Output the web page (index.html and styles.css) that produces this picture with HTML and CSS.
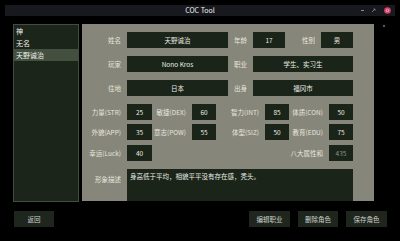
FILE: index.html
```html
<!DOCTYPE html>
<html lang="zh">
<head>
<meta charset="utf-8">
<title>COC Tool</title>
<link rel="stylesheet" href="styles.css">
</head>
<body>
<div class="app">
  <div class="titlebar">
    <span class="title">COC Tool</span>
    <div class="controls">
      <span class="min"></span>
      <svg class="max" width="5" height="5" viewBox="0 0 5 5"><path d="M1 4 L4 1" stroke="#8a8a90" stroke-width="0.8" fill="none"/><path d="M2.5 1 H4 V2.5" stroke="#8a8a90" stroke-width="0.8" fill="none"/></svg>
      <svg class="close" width="7" height="7" viewBox="0 0 7 7"><circle cx="3.5" cy="3.5" r="3.3" fill="#d8456a"/><circle cx="3.5" cy="3.5" r="1.6" fill="#f3b3c4"/><circle cx="3.5" cy="3.5" r="0.9" fill="#d8456a"/></svg>
    </div>
  </div>
  <span class="grip"></span>
  <div class="content">
    <ul class="list">
      <li>神</li>
      <li>无名</li>
      <li class="sel">天野诚治</li>
    </ul>
    <div class="panel">
      <div class="row">
        <span class="lb w45">姓名</span><span class="fd w101">天野诚治</span>
        <span class="lb w25">年龄</span><span class="fd w32">17</span>
        <span class="lb w36">性别</span><span class="fd w32">男</span>
      </div>
      <div class="row">
        <span class="lb w45">玩家</span><span class="fd w101">Nono Kros</span>
        <span class="lb w25">职业</span><span class="fd w100">学生、实习生</span>
      </div>
      <div class="row">
        <span class="lb w45">住地</span><span class="fd w101">日本</span>
        <span class="lb w25">出身</span><span class="fd w100">福冈市</span>
      </div>
      <div class="stats">
        <div class="row">
          <span class="lb w45">力量(STR)</span><span class="fd w25">25</span>
          <span class="lb w40">敏捷(DEX)</span><span class="fd w24">60</span>
          <span class="lb w49">智力(INT)</span><span class="fd w24">85</span>
          <span class="lb w40">体质(CON)</span><span class="fd w24">50</span>
        </div>
        <div class="row">
          <span class="lb w45">外貌(APP)</span><span class="fd w25">35</span>
          <span class="lb w40">意志(POW)</span><span class="fd w24">55</span>
          <span class="lb w49">体型(SIZ)</span><span class="fd w24">50</span>
          <span class="lb w40">教育(EDU)</span><span class="fd w24">75</span>
        </div>
        <div class="row row-last">
          <span class="lb w45">幸运(Luck)</span><span class="fd w25">40</span>
          <span class="spacer"></span>
          <span class="lb w40">八大属性和</span><span class="fd w24 muted">435</span>
        </div>
      </div>
      <div class="desc">
        <span class="lb w45 lb-top">形象描述</span>
        <div class="area">身高低于平均，相貌平平没有存在感，秃头。</div>
      </div>
    </div>
  </div>
  <div class="footer">
    <button class="btn w40">返回</button>
    <div class="btns">
      <button class="btn w41">编辑职业</button>
      <button class="btn w40">删除角色</button>
      <button class="btn w41">保存角色</button>
    </div>
  </div>
</div>
</body>
</html>
```
FILE: styles.css
```css
* { box-sizing: border-box; margin: 0; padding: 0; }
html, body { width: 400px; height: 241px; background: #000; overflow: hidden; }
body {
  font-family: "Noto Sans CJK SC", "Noto Sans", sans-serif;
  font-size: 6.5px;
  color: #e4e4dc;
  position: relative;
}
.app { padding-top: 5px; }

.titlebar {
  margin-left: 5px;
  width: 390px;
  height: 11px;
  background: #18181f;
  display: grid;
  grid-template-columns: 1fr auto 1fr;
  align-items: center;
}
.title { grid-column: 2; color: #f2f2f2; font-size: 7px; line-height: 11px; }
.controls {
  grid-column: 3;
  justify-self: end;
  display: flex;
  align-items: center;
  padding-right: 4px;
}
.min { width: 3px; height: 1px; background: #8a8a90; margin-right: 7px; }
.max { margin-right: 8px; }
.close { display: block; }

.grip {
  position: absolute;
  left: 383px;
  top: 25px;
  width: 2px;
  height: 2px;
  background: #5a5a5a;
}

.content {
  display: flex;
  gap: 3px;
  margin-top: 8px;
  padding-left: 13px;
}
.list {
  list-style: none;
  width: 66px;
  height: 178px;
  background: #1b2519;
  border: 1px solid #434c40;
  padding-top: 0;
}
.list li {
  height: 12px;
  line-height: 12px;
  padding-left: 2px;
  color: #f0f0ea;
  font-size: 7px;
}
.list li.sel { background: #44503f; }

.panel {
  width: 292px;
  height: 177px;
  background: #86867a;
  padding-top: 8px;
  display: flex;
  flex-direction: column;
  gap: 8px;
}
.row { display: flex; height: 16px; }
.stats { display: flex; flex-direction: column; gap: 4px; }
.row-last { margin-top: 1px; }
.lb {
  text-align: right;
  padding-right: 6px;
  line-height: 16px;
  color: #e6e6de;
  white-space: nowrap;
}
.fd {
  background: #1a2418;
  text-align: center;
  line-height: 16px;
  color: #ecece6;
}
.muted { color: #8d978c; }
.spacer { width: 137px; }

.w24 { width: 24px; }
.w25 { width: 25px; }
.w32 { width: 32px; }
.w36 { width: 36px; }
.w40 { width: 40px; }
.w41 { width: 41px; }
.w45 { width: 45px; }
.w49 { width: 49px; }
.w100 { width: 100px; }
.w101 { width: 101px; }

.desc { display: flex; flex: 1; }
.lb-top { line-height: 10px; padding-top: 5px; }
.area {
  width: 226px;
  background: #1a2418;
  color: #ecece6;
  padding: 2px 3px;
  line-height: 10px;
}

.footer {
  display: flex;
  justify-content: space-between;
  margin-top: 9px;
  padding: 0 13px 0 14px;
}
.btns { display: flex; gap: 8px; }
.btn {
  height: 16px;
  background: #1e261e;
  border: none;
  color: #cfd2cc;
  font-family: inherit;
  font-size: 6.5px;
  line-height: 16px;
  text-align: center;
}
```
